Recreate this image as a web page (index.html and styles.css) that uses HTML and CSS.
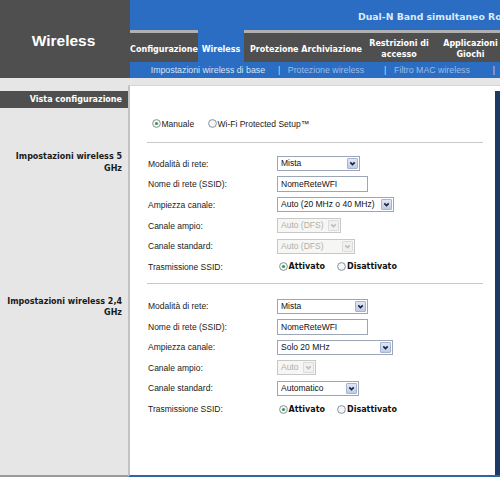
FILE: index.html
```html
<!DOCTYPE html>
<html lang="it">
<head>
<meta charset="utf-8">
<title>Wireless</title>
<link rel="stylesheet" href="styles.css">
</head>
<body>
<div class="page">
  <header class="header">
    <div class="brand">Wireless</div>
    <div class="nav">
      <div class="product">Dual-N Band simultaneo Router</div>
      <div class="tabs">
        <div class="tab t-conf">Configurazione</div>
        <div class="tab t-wifi active">Wireless</div>
        <div class="tab t-prot">Protezione Archiviazione</div>
        <div class="tab t-restr">Restrizioni di<br>accesso</div>
        <div class="tab t-app">Applicazioni<br>Giochi</div>
      </div>
      <div class="subnav">
        <span class="sub current">Impostazioni wireless di base</span>
        <span class="sep s1">|</span>
        <span class="sub s-prot">Protezione wireless</span>
        <span class="sep s2">|</span>
        <span class="sub s-mac">Filtro MAC wireless</span>
        <span class="sep s3">|</span>
      </div>
    </div>
  </header>
  <main class="main">
    <aside class="side">
      <div class="side-title">Vista configurazione</div>
      <div class="side-label first">Impostazioni wireless 5 GHz</div>
      <div class="side-label second">Impostazioni wireless 2,4 GHz</div>
    </aside>
    <section class="content">
      <div class="panel">
        <div class="mode">
          <span class="radio"><svg class="rb" viewBox="0 0 9 9"><circle class="ring" cx="4.5" cy="4.5" r="3.9"/><circle class="dot" cx="4.5" cy="4.5" r="1.6"/></svg>Manuale</span>
          <span class="radio wps"><svg class="rb" viewBox="0 0 9 9"><circle class="ring" cx="4.5" cy="4.5" r="3.9"/></svg>Wi-Fi Protected Setup™</span>
        </div>
        <hr class="rule top-rule">
        <div class="form">
          <div class="row"><span class="lbl">Modalità di rete:</span><div class="sel w83"><span class="val">Mista</span><span class="btn"><svg viewBox="0 0 9 9"><path d="M2.3 3.4 L4.5 5.6 L6.7 3.4"/></svg></span></div></div>
          <div class="row"><span class="lbl">Nome di rete (SSID):</span><div class="inp w91">NomeReteWFI</div></div>
          <div class="row"><span class="lbl">Ampiezza canale:</span><div class="sel w117"><span class="val">Auto (20 MHz o 40 MHz)</span><span class="btn"><svg viewBox="0 0 9 9"><path d="M2.3 3.4 L4.5 5.6 L6.7 3.4"/></svg></span></div></div>
          <div class="row"><span class="lbl">Canale ampio:</span><div class="sel dis w64"><span class="val">Auto (DFS)</span><span class="btn"><svg viewBox="0 0 9 9"><path d="M2.3 3.4 L4.5 5.6 L6.7 3.4"/></svg></span></div></div>
          <div class="row"><span class="lbl">Canale standard:</span><div class="sel dis w78"><span class="val">Auto (DFS)</span><span class="btn"><svg viewBox="0 0 9 9"><path d="M2.3 3.4 L4.5 5.6 L6.7 3.4"/></svg></span></div></div>
          <div class="row"><span class="lbl">Trasmissione SSID:</span>
            <div class="rpair">
              <span class="radio on"><svg class="rb" viewBox="0 0 9 9"><circle class="ring" cx="4.5" cy="4.5" r="3.9"/><circle class="dot" cx="4.5" cy="4.5" r="1.6"/></svg>Attivato</span>
              <span class="radio off"><svg class="rb" viewBox="0 0 9 9"><circle class="ring" cx="4.5" cy="4.5" r="3.9"/></svg>Disattivato</span>
            </div>
          </div>
        </div>
        <hr class="rule mid-rule">
        <div class="form">
          <div class="row"><span class="lbl">Modalità di rete:</span><div class="sel w91"><span class="val">Mista</span><span class="btn"><svg viewBox="0 0 9 9"><path d="M2.3 3.4 L4.5 5.6 L6.7 3.4"/></svg></span></div></div>
          <div class="row"><span class="lbl">Nome di rete (SSID):</span><div class="inp w91">NomeReteWFI</div></div>
          <div class="row"><span class="lbl">Ampiezza canale:</span><div class="sel w116"><span class="val">Solo 20 MHz</span><span class="btn"><svg viewBox="0 0 9 9"><path d="M2.3 3.4 L4.5 5.6 L6.7 3.4"/></svg></span></div></div>
          <div class="row"><span class="lbl">Canale ampio:</span><div class="sel dis w39"><span class="val">Auto</span><span class="btn"><svg viewBox="0 0 9 9"><path d="M2.3 3.4 L4.5 5.6 L6.7 3.4"/></svg></span></div></div>
          <div class="row"><span class="lbl">Canale standard:</span><div class="sel w82"><span class="val">Automatico</span><span class="btn"><svg viewBox="0 0 9 9"><path d="M2.3 3.4 L4.5 5.6 L6.7 3.4"/></svg></span></div></div>
          <div class="row"><span class="lbl">Trasmissione SSID:</span>
            <div class="rpair">
              <span class="radio on"><svg class="rb" viewBox="0 0 9 9"><circle class="ring" cx="4.5" cy="4.5" r="3.9"/><circle class="dot" cx="4.5" cy="4.5" r="1.6"/></svg>Attivato</span>
              <span class="radio off"><svg class="rb" viewBox="0 0 9 9"><circle class="ring" cx="4.5" cy="4.5" r="3.9"/></svg>Disattivato</span>
            </div>
          </div>
        </div>
      </div>
      <div class="edge"></div>
    </section>
  </main>
</div>
</body>
</html>
```

FILE: styles.css
```css
html, body {
  margin: 0;
  padding: 0;
}
body {
  width: 500px;
  height: 477px;
  overflow: hidden;
  background: #e6e6e6;
  font-family: "Liberation Sans", Arial, sans-serif;
}
.page {
  width: 500px;
  height: 477px;
  display: flex;
  flex-direction: column;
}

/* ---------- header ---------- */
.header {
  display: flex;
  height: 78px;
  flex-shrink: 0;
}
.brand {
  width: 130px;
  flex-shrink: 0;
  box-sizing: border-box;
  background: #4f4f4f;
  color: #fff;
  font: bold 15.5px/18px "Liberation Sans", Arial, sans-serif;
  text-align: center;
  padding: 32px 3px 0 0;
}
.nav {
  width: 370px;
  overflow: hidden;
  display: flex;
  flex-direction: column;
}
.product {
  height: 30px;
  box-sizing: border-box;
  background: #2a6dc2;
  color: #dde9f8;
  padding: 11px 0 0 228px;
  font: bold 9.3px/12px "DejaVu Sans", Verdana, sans-serif;
  white-space: nowrap;
  overflow: hidden;
}
.tabs {
  display: flex;
  height: 32px;
  background: #4f4f4f;
}
.tab {
  flex-shrink: 0;
  box-sizing: border-box;
  height: 32px;
  border-top: 3px solid #b0b0b0;
  padding-top: 3px;
  display: flex;
  align-items: center;
  justify-content: center;
  text-align: center;
  color: #fff;
  font: bold 8px/11px "DejaVu Sans", Verdana, sans-serif;
  white-space: nowrap;
}
.tab.active {
  background: #2a6dc2;
  border-top-color: #2a6dc2;
}
.t-conf { width: 68px; }
.t-wifi { width: 46px; }
.t-prot { width: 124px; }
.t-restr { width: 62px; }
.t-app { width: 81px; }

.subnav {
  height: 16px;
  background: #2a6dc2;
  display: flex;
  align-items: center;
  font: 8.8px/16px "Liberation Sans", Arial, sans-serif;
  white-space: nowrap;
  color: #9dbde8;
}
.sub.current { margin-left: 20.7px; color: #d6e4f7; }
.sep { color: #c9dbf4; }
.s1 { margin-left: 13px; }
.s-prot { margin-left: 7.4px; }
.s2 { margin-left: 20px; }
.s-mac { margin-left: 7.7px; }
.s3 { margin-left: 23px; }

/* ---------- main ---------- */
.main {
  display: flex;
  height: 399px;
}
.side {
  width: 128px;
  flex-shrink: 0;
  box-sizing: border-box;
  padding-top: 13px;
  border-bottom: 2px solid #9a9a9a;
}
.side-title {
  height: 17px;
  background: #4f4f4f;
  color: #fff;
  font: bold 8px/17px "DejaVu Sans", Verdana, sans-serif;
  text-align: right;
  padding-right: 6px;
  white-space: nowrap;
}
.side-label {
  font: bold 8px/11.5px "DejaVu Sans", Verdana, sans-serif;
  color: #1a1a1a;
  text-align: right;
  padding: 0 6px 0 5px;
}
.side-label.first { margin-top: 43px; }
.side-label.second { margin-top: 121.5px; }

.content {
  flex: 1;
  margin-top: 7px;
  background: #fff;
  border-left: 2px solid #c2c2c2;
  border-top: 1px solid #d6d6d6;
  border-bottom: 2px solid #2f65a8;
  display: flex;
}
.panel {
  flex: 1;
  padding: 30px 12px 0 17px;
}
.edge {
  width: 5px;
  margin-top: 5px;
  background: #1d3a66;
}

.mode {
  display: flex;
  align-items: center;
  height: 15px;
  padding-left: 4.5px;
  font-size: 8.5px;
  color: #1a1a1a;
}
.radio {
  display: inline-flex;
  align-items: center;
  white-space: nowrap;
}
.rb {
  width: 9px;
  height: 9px;
  flex-shrink: 0;
  margin-right: 1px;
}
.rb .ring {
  fill: #f6f6f6;
  stroke: #7b8796;
  stroke-width: 0.9;
}
.rb .dot {
  fill: #34a43a;
}
.mode .wps { margin-left: 13.4px; }

.rule {
  border: 0;
  height: 1px;
  background: #c9c9c9;
}
.top-rule { margin: 10.5px 0 11px; }
.mid-rule { margin: 6.4px 0 11.3px; }

.row {
  display: flex;
  align-items: center;
  height: 20.6px;
}
.lbl {
  width: 129px;
  padding-left: 1px;
  flex-shrink: 0;
  font-size: 8.5px;
  color: #1a1a1a;
  white-space: nowrap;
}

.sel {
  display: flex;
  height: 15px;
  box-sizing: border-box;
  border: 1px solid #9ba7b7;
  background: #fff;
}
.sel .val {
  flex: 1;
  padding-left: 3px;
  font-size: 8.5px;
  line-height: 13px;
  color: #111;
  white-space: nowrap;
  overflow: hidden;
}
.sel .btn {
  width: 11px;
  margin: 1px;
  box-sizing: border-box;
  border: 1px solid #a6b4d2;
  border-radius: 1px;
  background: linear-gradient(#e0e7f5, #bfcbe6);
  display: flex;
  align-items: center;
  justify-content: center;
}
.sel .btn svg {
  width: 9px;
  height: 9px;
}
.sel .btn path {
  fill: none;
  stroke: #18223a;
  stroke-width: 1.6;
}
.sel.dis {
  border-color: #c8c8c8;
  background: #f6f6f4;
}
.sel.dis .val { color: #b0b0aa; }
.sel.dis .btn {
  border-color: #dcdcdc;
  background: #f0f0f0;
}
.sel.dis .btn path { stroke: #bdbdbd; }

.inp {
  height: 16px;
  box-sizing: border-box;
  border: 1px solid #9ba7b7;
  background: #fff;
  padding-left: 3px;
  font-size: 8.5px;
  line-height: 14px;
  color: #111;
  white-space: nowrap;
}

.w39 { width: 39px; }
.w64 { width: 64px; }
.w78 { width: 78px; }
.w82 { width: 82px; }
.w83 { width: 83px; }
.w91 { width: 91px; }
.w116 { width: 116px; }
.w117 { width: 117px; }

.rpair {
  display: flex;
  align-items: center;
  font: bold 8px/11px "DejaVu Sans", Verdana, sans-serif;
  color: #111;
}
.rpair .on { margin-left: 1.5px; }
.rpair .off { margin-left: 12px; }
```
